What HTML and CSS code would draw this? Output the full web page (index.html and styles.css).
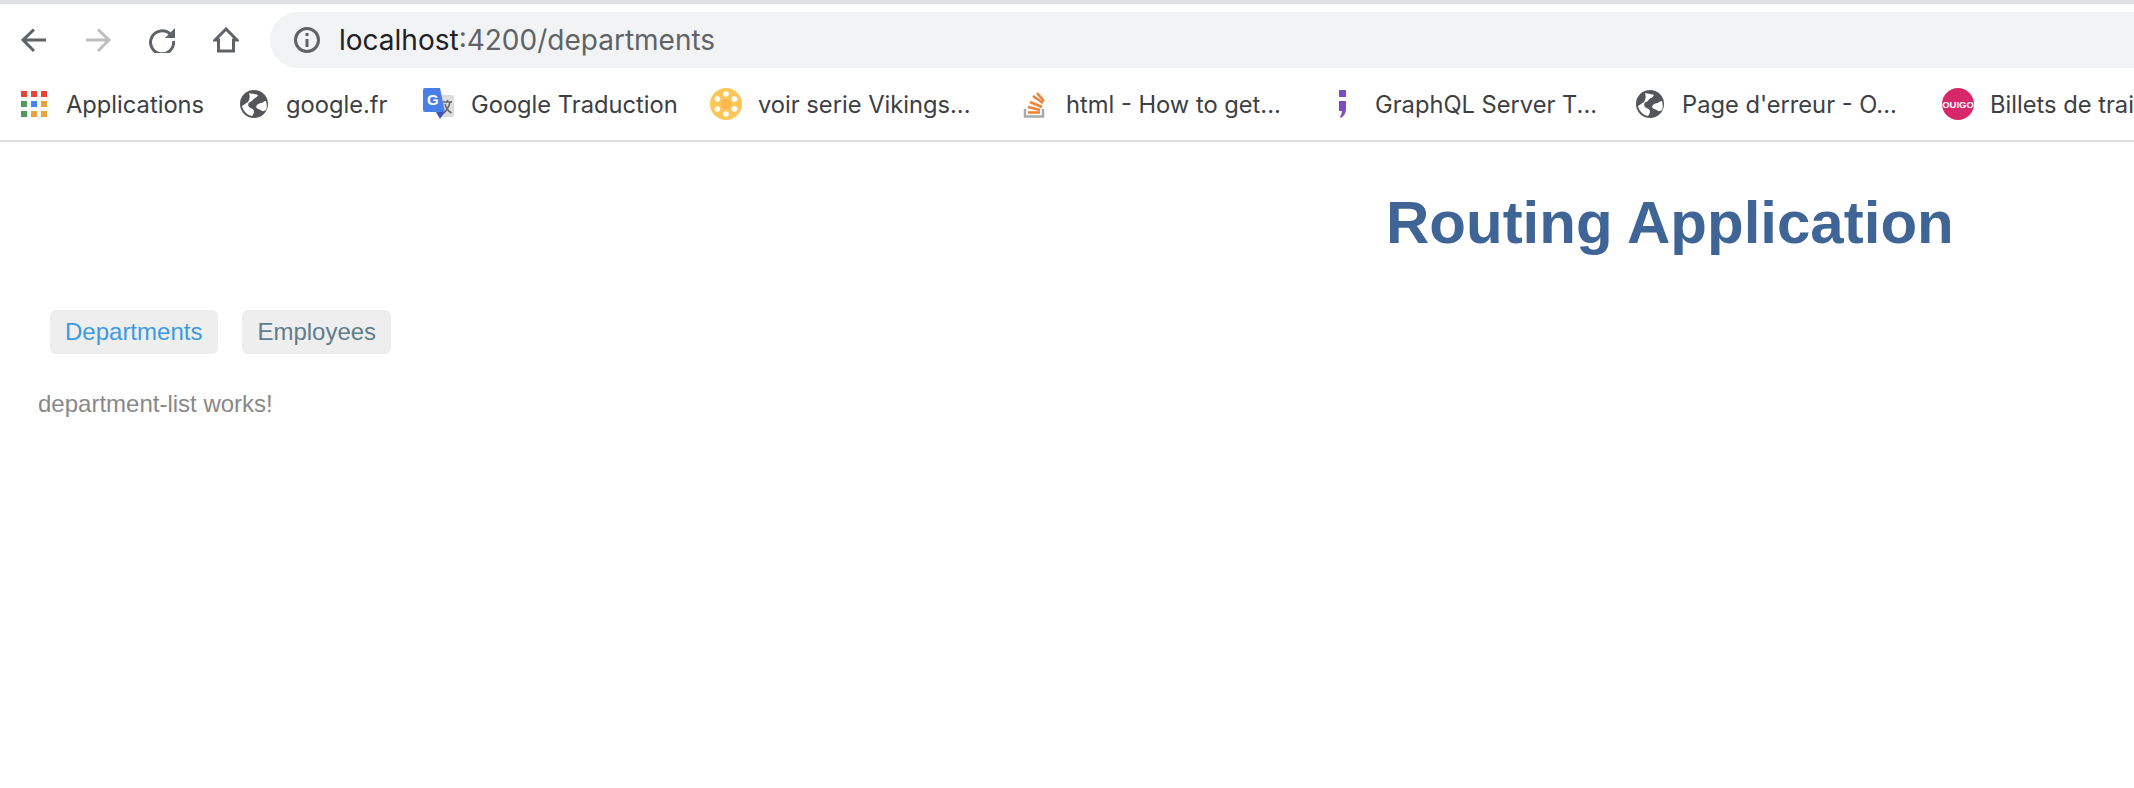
FILE: index.html
```html
<!DOCTYPE html>
<html lang="en">
<head>
    <meta charset="UTF-8">
    <meta name="viewport" content="width=device-width, initial-scale=1.0">
    <title>Routing Application</title>
    <link rel="stylesheet" href="styles.css">
</head>
<body>
    <div class="toolbar">
        <svg class="tool-icon" viewBox="0 0 26 26"><path d="M25 13H3M13 2.500 2 13l11 11" /></svg>
        <svg class="tool-icon disabled" viewBox="0 0 26 26"><path d="M1 13h22M13 2.500 24 13 13 24" /></svg>
        <svg class="tool-icon" viewBox="0 0 26 26"><path d="M21.500 7.500A11.500 11.500 0 1 0 24.500 14" /><path class="solid" d="M26 1v10H16z" /></svg>
        <svg class="tool-icon" viewBox="0 0 26 26"><path d="M13 2 2 13h3.500v11h15V13H24z" /></svg>
        <div class="address-bar">
            <svg class="info-icon" viewBox="0 0 28 28"><circle cx="14" cy="14" r="11.500" /><path d="M14 13v8M14 7v3" /></svg>
            <span class="host">localhost</span><span class="path">:4200/departments</span>
        </div>
    </div>

    <div class="bookmarks">
        <a class="bookmark mark-apps">
            <svg class="favicon-apps" viewBox="0 0 26 26">
                <rect x="0" y="0" width="6" height="6" fill="#ea4335" /><rect x="10" y="0" width="6" height="6" fill="#ea4335" /><rect x="20" y="0" width="6" height="6" fill="#ea4335" />
                <rect x="0" y="10" width="6" height="6" fill="#4f9b5e" /><rect x="10" y="10" width="6" height="6" fill="#4285f4" /><rect x="20" y="10" width="6" height="6" fill="#e8a33a" />
                <rect x="0" y="20" width="6" height="6" fill="#4f9b5e" /><rect x="10" y="20" width="6" height="6" fill="#e8a33a" /><rect x="20" y="20" width="6" height="6" fill="#e8a33a" />
            </svg>
            Applications
        </a>
        <a class="bookmark mark-google">
            <svg class="favicon-globe" viewBox="0 0 28 28"><circle cx="14" cy="14" r="14" fill="#54565b" /><path fill="#fff" d="M9 3c3 1 7 1 9 2-1 3-5 3-6 6-3 1-5 3-3 6 2 2 4 1 5 4 0 2-1 4-2 5C7 25 3 21 2 16l6-4c2-3 2-6 1-9zM26 11c1 3 1 7 0 9-2 1-4 2-5 0-2-1-4-1-5-3 1-3 3-4 6-4 1-1 2-2 4-2z" /></svg>
            google.fr
        </a>
        <a class="bookmark mark-translate">
            <svg class="favicon" viewBox="0 0 32 32"><path fill="#dcdcdc" d="M16 7h13a2 2 0 0 1 2 2v18a2 2 0 0 1-2 2H18z" /><path fill="#4a7fe8" d="M2 0h15l5 24H2a2 2 0 0 1-2-2V2a2 2 0 0 1 2-2z" /><path fill="#3a56b8" d="M13 24h9l-5 7z" /><text class="favicon-g" x="4" y="17">G</text><path class="translate-mark" d="M20 14h9M24.500 12v2M22 16c1 4 3 7 6.500 9M27 14c-1 5-3 8-6 11" /></svg>
            Google Traduction
        </a>
        <a class="bookmark mark-vikings">
            <svg class="favicon" viewBox="0 0 32 32"><circle cx="16" cy="16" r="16" fill="#fcc659" /><g fill="#fff"><circle cx="16" cy="6" r="2.800" /><circle cx="16" cy="26" r="2.800" /><circle cx="7.500" cy="11" r="2.800" /><circle cx="24.500" cy="11" r="2.800" /><circle cx="7.500" cy="21" r="2.800" /><circle cx="24.500" cy="21" r="2.800" /></g><circle cx="16" cy="16" r="5" fill="#f8b84a" /></svg>
            voir serie Vikings...
        </a>
        <a class="bookmark mark-stack">
            <svg class="favicon" viewBox="0 0 32 32"><path fill="none" stroke="#a9a9a9" stroke-width="2.500" d="M7 21v7.500h18V21" /><path fill="none" stroke="#ef8236" stroke-width="2.600" d="M10 24.500h12M10 19l12 3M12 14l12 5M15 8l10 7M19 5l7 8" /></svg>
            html - How to get...
        </a>
        <a class="bookmark mark-graphql">
            <svg class="favicon" viewBox="0 0 32 32"><path fill="#7e4bc0" d="M12 2h7v7h-7zM12 13h7v8c0 4-2 7-5 9l-1-1c1-2 2-4 2-6h-3z" /></svg>
            GraphQL Server T...
        </a>
        <a class="bookmark mark-error">
            <svg class="favicon-globe" viewBox="0 0 28 28"><circle cx="14" cy="14" r="14" fill="#54565b" /><path fill="#fff" d="M9 3c3 1 7 1 9 2-1 3-5 3-6 6-3 1-5 3-3 6 2 2 4 1 5 4 0 2-1 4-2 5C7 25 3 21 2 16l6-4c2-3 2-6 1-9zM26 11c1 3 1 7 0 9-2 1-4 2-5 0-2-1-4-1-5-3 1-3 3-4 6-4 1-1 2-2 4-2z" /></svg>
            Page d'erreur - O...
        </a>
        <a class="bookmark mark-ouigo">
            <svg class="favicon" viewBox="0 0 32 32"><circle cx="16" cy="16" r="16" fill="#d6286b" /><text class="favicon-ouigo" x="16" y="19.500">OUIGO</text></svg>
            Billets de train...
        </a>
    </div>

    <main class="page">
        <h1 class="app-title">Routing Application</h1>
        <ul class="nav-list">
            <li class="nav-item active">Departments</li>
            <li class="nav-item">Employees</li>
        </ul>
        <p class="outlet-text">department-list works!</p>
    </main>
</body>
</html>
```

FILE: styles.css
```css
html, body {
    margin: 0;
    padding: 0;
    background-color: #fff;
    overflow: hidden;
}
body {
    font-family: "Liberation Sans", Arial, sans-serif;
}
.toolbar {
    display: flex;
    align-items: center;
    gap: 38px;
    height: 72px;
    padding-left: 21px;
    border-top: 4px solid #dfe1e5;
}
.tool-icon {
    width: 26px;
    height: 26px;
    flex: none;
    fill: none;
    stroke: #5f6368;
    stroke-width: 3;
}
.tool-icon.disabled {
    stroke: #bdbebf;
}
.tool-icon .solid {
    fill: #5f6368;
    stroke: none;
}
.address-bar {
    display: flex;
    align-items: center;
    flex: 1;
    height: 56px;
    margin-left: -7px;
    margin-right: -40px;
    padding-left: 23px;
    background-color: #f1f3f4;
    border-radius: 28px;
    font-family: Inter, sans-serif;
    font-size: 28px;
}
.info-icon {
    width: 28px;
    height: 28px;
    margin-right: 18px;
    fill: none;
    stroke: #5f6368;
    stroke-width: 3;
}
.host {
    color: #202124;
}
.path {
    color: #5f6368;
}
.bookmarks {
    display: flex;
    align-items: center;
    height: 56px;
    padding-bottom: 8px;
    border-bottom: 2px solid #dcdde0;
    font-family: Inter, sans-serif;
    font-size: 23.700px;
    color: #3c4043;
    white-space: nowrap;
}
.bookmark {
    display: flex;
    flex: none;
    align-items: center;
    gap: 16px;
    box-sizing: border-box;
}
.mark-apps { width: 240px; padding-left: 21px; gap: 19px; }
.mark-google { width: 183px; gap: 18px; }
.mark-translate { width: 287px; }
.mark-vikings { width: 308px; }
.mark-stack { width: 309px; }
.mark-graphql { width: 309px; }
.mark-error { width: 306px; gap: 18px; }
.favicon-apps {
    width: 26px;
    height: 26px;
    flex: none;
}
.favicon-globe {
    width: 28px;
    height: 28px;
    flex: none;
}
.favicon {
    width: 32px;
    height: 32px;
    flex: none;
}
.favicon-g {
    font-family: "Liberation Sans", sans-serif;
    font-size: 15px;
    font-weight: bold;
    fill: #fff;
}
.translate-mark {
    fill: none;
    stroke: #666;
    stroke-width: 1.500;
}
.favicon-ouigo {
    font-family: "Liberation Sans", sans-serif;
    font-size: 9.500px;
    font-weight: bold;
    fill: #fff;
    text-anchor: middle;
}
.page {
    padding: 0 38px;
}
.app-title {
    margin: 45px 0 0;
    padding-left: 1348px;
    font-size: 60px;
    line-height: 72px;
    color: #3f6596;
    white-space: nowrap;
}
.nav-list {
    display: flex;
    gap: 24px;
    margin: 51px 0 0;
    padding: 0 0 0 12px;
    list-style: none;
}
.nav-item {
    padding: 0 15px;
    height: 44px;
    line-height: 44px;
    background-color: #eee;
    border-radius: 6px;
    font-size: 24px;
    color: #607d8b;
}
.nav-item.active {
    padding-right: 16px;
    color: #3d9ae2;
}
.outlet-text {
    margin: 36px 0 0;
    font-size: 24px;
    line-height: 28px;
    color: #888;
}
```
